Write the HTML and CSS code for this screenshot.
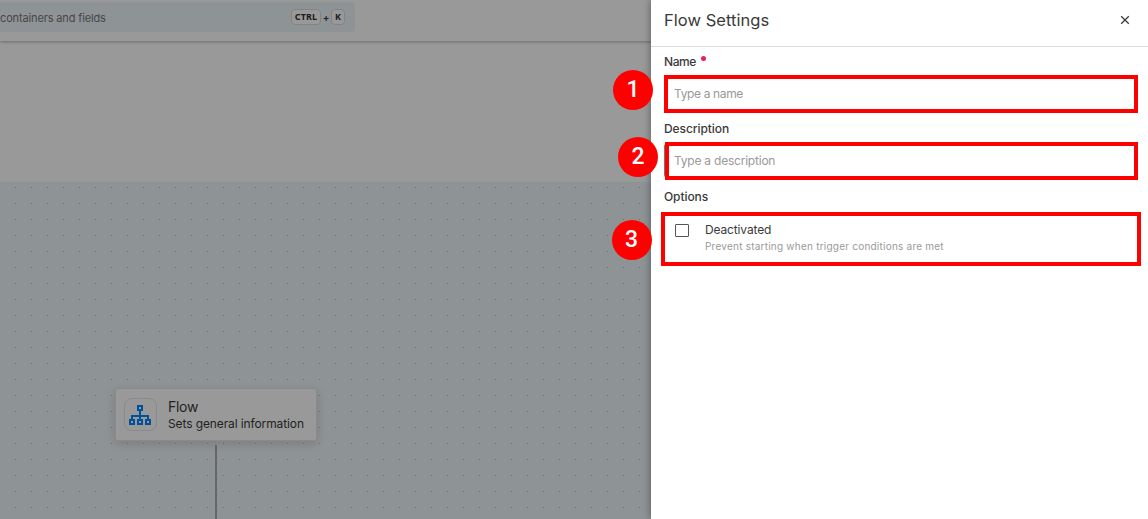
FILE: index.html
```html
<!DOCTYPE html>
<html lang="en">
<head>
<meta charset="utf-8">
<title>Flow Settings</title>
<link rel="stylesheet" href="styles.css">
</head>
<body>
<div class="app">
  <header class="topbar">
    <div class="search">
      <span class="search-text">containers and fields</span>
      <span class="keys"><kbd class="ctrl">CTRL</kbd><span class="plus">+</span><kbd>K</kbd></span>
    </div>
  </header>
  <div class="subbar"></div>
  <main class="canvas">
    <div class="node">
      <span class="node-icon">
        <svg width="24" height="22" viewBox="0 0 24 22" fill="none" stroke="#0087ff" stroke-width="2">
          <rect x="10" y="2" width="4" height="4"/>
          <path d="M12 6v10M4 16v-4h16v4"/>
          <rect x="2" y="16" width="4" height="4"/>
          <rect x="10" y="16" width="4" height="4"/>
          <rect x="18" y="16" width="4" height="4"/>
        </svg>
      </span>
      <span class="node-copy">
        <span class="node-title">Flow</span>
        <span class="node-sub">Sets general information</span>
      </span>
    </div>
    <div class="edge"></div>
  </main>
</div>
<div class="overlay"></div>
<aside class="drawer">
  <div class="drawer-head">
    <h1>Flow Settings</h1>
    <svg class="close" width="10" height="10" viewBox="0 0 10 10" stroke="#3c3c3c" stroke-width="1.3"><path d="M1.2 1.2l7.6 7.6M8.8 1.2L1.2 8.8"/></svg>
  </div>
  <div class="form">
    <div class="label name-label"><span>Name</span><i class="required"></i></div>
    <div class="field"><span class="ph-name">Type a name</span></div>
    <div class="label desc-label"><span>Description</span></div>
    <div class="field"><span class="ph-desc">Type a description</span></div>
    <div class="label opt-label"><span>Options</span></div>
    <div class="option">
      <span class="checkbox"></span>
      <span class="option-copy">
        <span class="option-title">Deactivated</span>
        <span class="option-sub">Prevent starting when trigger conditions are met</span>
      </span>
    </div>
  </div>
</aside>
<div class="mark mark-name"></div>
<div class="mark mark-desc"></div>
<div class="mark mark-opt"></div>
<div class="badge badge-1">1</div>
<div class="badge badge-2">2</div>
<div class="badge badge-3">3</div>
</body>
</html>
```
FILE: styles.css
```css
* { box-sizing: border-box; }
body {
  margin: 0;
  width: 1148px;
  height: 519px;
  overflow: hidden;
  position: relative;
  background: #fff;
  font-family: Inter, "Open Sans", sans-serif;
  color: #3a3a3a;
}
span, h1 { white-space: nowrap; }

.app { height: 519px; display: flex; flex-direction: column; }
.topbar {
  height: 41px;
  flex: none;
  padding-top: 2px;
  background: #fff;
  box-shadow: 0 1px 3px rgba(0, 0, 0, .3);
  z-index: 1;
}
.search {
  width: 355px;
  height: 30px;
  display: flex;
  align-items: center;
  justify-content: space-between;
  padding-right: 10px;
  background: #edf5fa;
  border-radius: 0 4px 4px 0;
}
.search-text { font-size: 11px; letter-spacing: -.14px; color: #777; padding-top: 2px; }
.keys { display: flex; align-items: center; font-size: 10px; font-weight: 600; }
kbd {
  height: 16px;
  width: 14px;
  text-align: center;
  border: 1px solid #dcdcdc;
  border-radius: 4px;
  background: #fff;
  font: 700 9px/14px "Noto Sans", sans-serif;
  color: #333;
}
.ctrl { width: 30px; letter-spacing: .1px; }
.plus { width: 10px; text-align: center; }
.subbar { height: 141px; flex: none; background: #fff; }
.canvas {
  flex: 1;
  padding: 206px 0 0 115px;
  background-color: #edf5fa;
  background-image: radial-gradient(circle at 8.5px 8.5px, #b4babe .5px, transparent .9px);
  background-size: 16px 16px;
  background-position: 7px -3px;
}
.node {
  width: 202px;
  height: 53px;
  display: flex;
  align-items: center;
  padding-left: 8px;
  gap: 11px;
  background: #fff;
  border: 1px solid #e6e6e6;
  border-radius: 3px;
  box-shadow: 0 3px 10px rgba(50, 20, 20, .16);
}
.node-icon {
  width: 33px;
  height: 33px;
  display: flex;
  align-items: center;
  justify-content: center;
  padding-right: 2px;
  border: 1px solid #e5e5e5;
  border-radius: 8px;
}
.node-icon svg { flex: none; }
.node-copy { display: flex; flex-direction: column; color: #3a3a3a; }
.node-title { font-size: 14px; line-height: 18px; letter-spacing: -.3px; }
.node-sub { font-size: 12px; line-height: 16px; letter-spacing: -.11px; }
.edge { width: 2px; height: 80px; margin: 4px 0 0 100px; background: #aaa; }

.overlay { position: absolute; inset: 0; background: rgba(0, 0, 0, .4); z-index: 2; }

.drawer {
  position: absolute;
  z-index: 3;
  top: 0;
  right: 0;
  width: 497px;
  height: 519px;
  background: #fff;
  box-shadow: 0 0 8px rgba(0, 0, 0, .4);
}
.drawer-head {
  height: 47px;
  display: flex;
  justify-content: space-between;
  align-items: center;
  padding: 0 18px 6px 13px;
  border-bottom: 1px solid #dcdcdc;
}
h1 { margin: 0; font-size: 16.5px; line-height: 22px; font-weight: 400; letter-spacing: .05px; }
.form { padding: 0 12px 0 13px; }
.label {
  display: flex;
  font-size: 12px;
  font-weight: 500;
  line-height: 16px;
  letter-spacing: -.08px;
}
.name-label { padding-top: 7px; height: 29px; letter-spacing: -.4px; }
.desc-label { padding-top: 10px; height: 32px; }
.opt-label { padding-top: 11px; height: 33px; }
.required { width: 5px; height: 5px; margin: 2px 0 0 5px; border-radius: 50%; background: #e91e63; }
.field {
  height: 35px;
  display: flex;
  align-items: center;
  padding-left: 9px;
  border: 1px solid #777;
  border-radius: 3px;
  font-size: 12px;
  color: #999;
}
.ph-name { letter-spacing: -.36px; }
.ph-desc { letter-spacing: -.22px; }
.option { display: flex; gap: 16px; padding: 10px 0 0 11px; }
.checkbox { width: 14px; height: 13px; margin-top: 3px; border: 1px solid #555; border-radius: 1px; }
.option-copy { display: flex; flex-direction: column; }
.option-title { font-size: 12px; line-height: 17px; letter-spacing: -.14px; }
.option-sub { font-size: 10px; line-height: 17px; letter-spacing: .225px; color: #999; }

.mark { position: absolute; z-index: 4; border: 4px solid #f00; }
.mark-name { left: 664px; top: 75px; width: 474px; height: 38px; }
.mark-desc { left: 665px; top: 142px; width: 473px; height: 38px; }
.mark-opt { left: 661px; top: 212px; width: 480px; height: 54px; }
.badge {
  position: absolute;
  z-index: 4;
  width: 40px;
  height: 40px;
  border-radius: 50%;
  background: #f00;
  color: #fff;
  font: 500 23px/40px Roboto, sans-serif;
  text-align: center;
}
.badge-1 { left: 613px; top: 70px; }
.badge-2 { left: 618px; top: 137px; }
.badge-3 { left: 611.5px; top: 220px; }
```
